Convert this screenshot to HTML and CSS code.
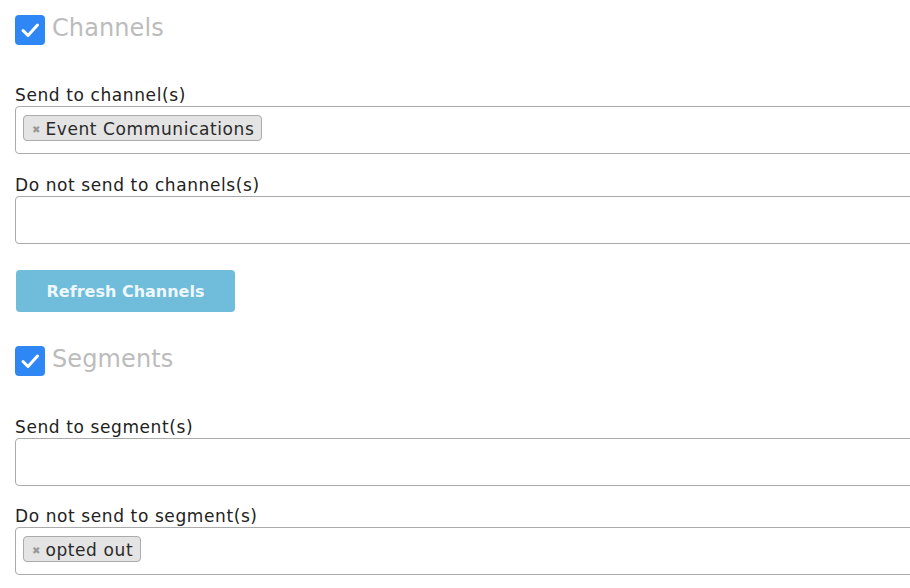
FILE: index.html
```html
<!DOCTYPE html>
<html>
<head>
<meta charset="utf-8">
<link rel="stylesheet" href="styles.css">
</head>
<body>
<div class="form">
  <div class="section-head">
    <span class="check"><svg viewBox="0 0 30 30" width="30" height="30"><path d="M8 15.5 L13 20.5 L22.5 10" fill="none" stroke="#fff" stroke-width="3" stroke-linecap="round" stroke-linejoin="round"/></svg></span>
    <span class="section-title">Channels</span>
  </div>
  <div class="field">
    <label class="label">Send to channel(s)</label>
    <div class="select"><span class="tag"><span class="tag-x">✖</span>Event Communications</span></div>
  </div>
  <div class="field">
    <label class="label">Do not send to channels(s)</label>
    <div class="select"></div>
  </div>
  <button class="btn">Refresh Channels</button>
  <div class="section-head seg">
    <span class="check"><svg viewBox="0 0 30 30" width="30" height="30"><path d="M8 15.5 L13 20.5 L22.5 10" fill="none" stroke="#fff" stroke-width="3" stroke-linecap="round" stroke-linejoin="round"/></svg></span>
    <span class="section-title">Segments</span>
  </div>
  <div class="field after-seg">
    <label class="label">Send to segment(s)</label>
    <div class="select"></div>
  </div>
  <div class="field tight">
    <label class="label">Do not send to segment(s)</label>
    <div class="select"><span class="tag"><span class="tag-x">✖</span>opted out</span></div>
  </div>
</div>
</body>
</html>
```
FILE: styles.css
```css
html, body {
  margin: 0;
  padding: 0;
  background: #fff;
  overflow: hidden;
}
body {
  font-family: "DejaVu Sans", "Open Sans", sans-serif;
  color: #222;
}
.form {
  width: 895px;
  padding: 15px 0 0 15px;
  display: flex;
  flex-direction: column;
  align-items: flex-start;
}
.section-head {
  display: flex;
  align-items: center;
  gap: 7px;
  height: 30px;
}
.section-head.seg {
  margin-top: 34px;
}
.check {
  width: 30px;
  height: 30px;
  border-radius: 4px;
  background: #2f87f6;
  display: flex;
}
.section-title {
  font-size: 24px;
  letter-spacing: 0.1px;
  color: #bcbcbc;
  line-height: 30px;
  margin-top: -4px;
}
.field {
  display: flex;
  flex-direction: column;
  width: calc(100% + 20px);
  margin-top: 20px;
}
.section-head + .field {
  margin-top: 39px;
}
.section-head + .field.after-seg {
  margin-top: 40px;
}
.field.tight {
  margin-top: 19px;
}
.label {
  font-size: 17px;
  letter-spacing: 0.6px;
  line-height: 22px;
  height: 22px;
  color: #222;
}
.select {
  box-sizing: border-box;
  width: 100%;
  height: 48px;
  border: 1px solid #aaa;
  border-radius: 4px;
  padding: 8px 7px;
  display: flex;
  align-items: flex-start;
}
.tag {
  box-sizing: border-box;
  height: 26px;
  display: inline-flex;
  align-items: center;
  background: #e4e4e4;
  border: 1px solid #aaa;
  border-radius: 4px;
  padding: 2px 7px 0 8px;
  font-size: 17px;
  letter-spacing: 0.6px;
  color: #2a2a2a;
}
.tag-x {
  font-size: 10px;
  letter-spacing: 0;
  color: #999;
  margin-right: 5px;
}
.btn {
  margin-top: 26px;
  margin-left: 1px;
  width: 219px;
  height: 42px;
  border: none;
  border-radius: 4px;
  background: #6fbcdb;
  color: #eef8fc;
  font-family: inherit;
  font-weight: 600;
  font-size: 16px;
  padding: 0;
}
```
